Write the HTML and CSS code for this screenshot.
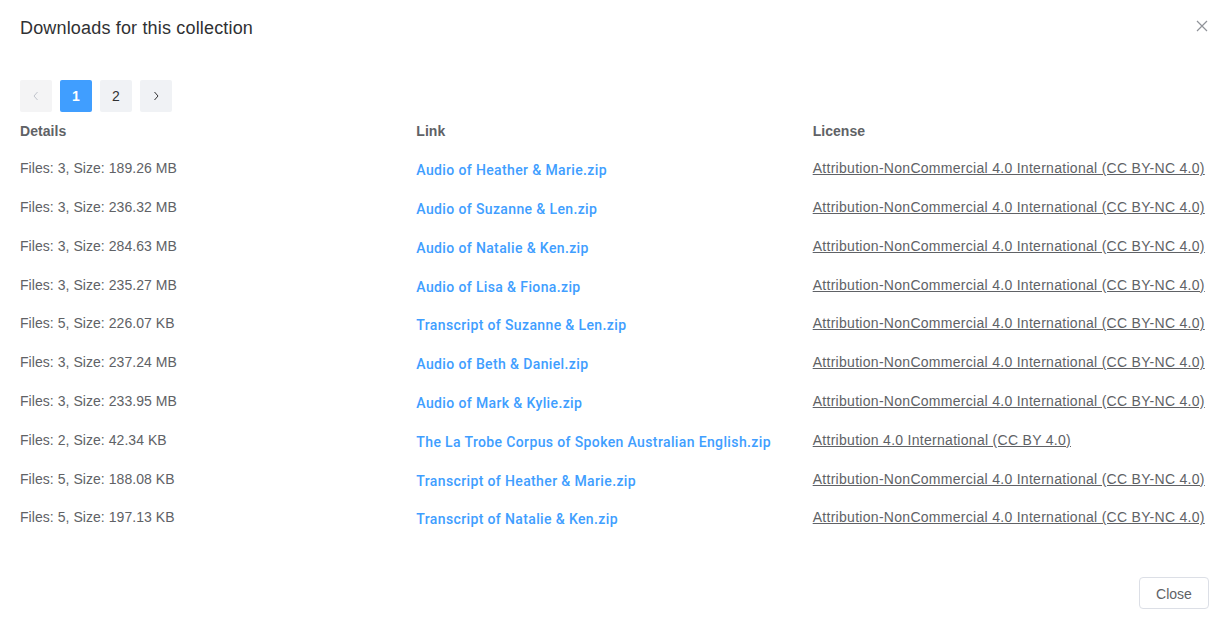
FILE: index.html
```html
<!DOCTYPE html>
<html>
<head>
<meta charset="utf-8">
<link rel="stylesheet" href="styles.css">
</head>
<body>
<div class="dialog">
  <div class="header">
    <span class="title">Downloads for this collection</span>
    <button class="x" aria-label="Close">
      <svg width="12" height="12" viewBox="0 0 12 12"><path d="M1 1L11 11M11 1L1 11" stroke="#909399" stroke-width="1.2" fill="none"/></svg>
    </button>
  </div>
  <div class="body">
    <div class="pager">
      <button class="pg disabled"><svg width="8" height="10" viewBox="0 0 8 10"><path d="M5.5 1L2 5l3.5 4" stroke="#c0c4cc" stroke-width="1" fill="none"/></svg></button>
      <button class="pg active">1</button>
      <button class="pg">2</button>
      <button class="pg"><svg width="8" height="10" viewBox="0 0 8 10"><path d="M2.5 1L6 5l-3.5 4" stroke="#303133" stroke-width="1" fill="none"/></svg></button>
    </div>
    <div class="table">
      <div class="row head"><div>Details</div><div>Link</div><div>License</div></div>
      <div class="row"><div>Files: 3, Size: 189.26 MB</div><div class="link"><a>Audio of Heather &amp; Marie.zip</a></div><div><a class="lic">Attribution-NonCommercial 4.0 International (CC BY-NC 4.0)</a></div></div>
      <div class="row"><div>Files: 3, Size: 236.32 MB</div><div class="link"><a>Audio of Suzanne &amp; Len.zip</a></div><div><a class="lic">Attribution-NonCommercial 4.0 International (CC BY-NC 4.0)</a></div></div>
      <div class="row"><div>Files: 3, Size: 284.63 MB</div><div class="link"><a>Audio of Natalie &amp; Ken.zip</a></div><div><a class="lic">Attribution-NonCommercial 4.0 International (CC BY-NC 4.0)</a></div></div>
      <div class="row"><div>Files: 3, Size: 235.27 MB</div><div class="link"><a>Audio of Lisa &amp; Fiona.zip</a></div><div><a class="lic">Attribution-NonCommercial 4.0 International (CC BY-NC 4.0)</a></div></div>
      <div class="row"><div>Files: 5, Size: 226.07 KB</div><div class="link"><a>Transcript of Suzanne &amp; Len.zip</a></div><div><a class="lic">Attribution-NonCommercial 4.0 International (CC BY-NC 4.0)</a></div></div>
      <div class="row"><div>Files: 3, Size: 237.24 MB</div><div class="link"><a>Audio of Beth &amp; Daniel.zip</a></div><div><a class="lic">Attribution-NonCommercial 4.0 International (CC BY-NC 4.0)</a></div></div>
      <div class="row"><div>Files: 3, Size: 233.95 MB</div><div class="link"><a>Audio of Mark &amp; Kylie.zip</a></div><div><a class="lic">Attribution-NonCommercial 4.0 International (CC BY-NC 4.0)</a></div></div>
      <div class="row"><div>Files: 2, Size: 42.34 KB</div><div class="link"><a>The La Trobe Corpus of Spoken Australian English.zip</a></div><div><a class="lic">Attribution 4.0 International (CC BY 4.0)</a></div></div>
      <div class="row"><div>Files: 5, Size: 188.08 KB</div><div class="link"><a>Transcript of Heather &amp; Marie.zip</a></div><div><a class="lic">Attribution-NonCommercial 4.0 International (CC BY-NC 4.0)</a></div></div>
      <div class="row"><div>Files: 5, Size: 197.13 KB</div><div class="link"><a>Transcript of Natalie &amp; Ken.zip</a></div><div><a class="lic">Attribution-NonCommercial 4.0 International (CC BY-NC 4.0)</a></div></div>
    </div>
  </div>
  <div class="footer">
    <button class="btn">Close</button>
  </div>
</div>
</body>
</html>
```
FILE: styles.css
```css
html, body {
  margin: 0;
  padding: 0;
  background: #fff;
}
body {
  font-family: "Liberation Sans", Arial, sans-serif;
  color: #606266;
  font-size: 14px;
  letter-spacing: 0.05px;
}
.dialog {
  width: 1229px;
  height: 622px;
  box-sizing: border-box;
  display: flex;
  flex-direction: column;
}
.header {
  position: relative;
  padding: 16px 20px 10px;
  line-height: 24px;
}
.title {
  font-size: 18px;
  color: #303133;
  letter-spacing: 0.17px;
}
.x {
  position: absolute;
  top: 20px;
  right: 21px;
  border: none;
  background: none;
  padding: 0;
  width: 12px;
  height: 12px;
  display: flex;
}
.body {
  padding: 29px 20px 0;
}
.pager {
  display: flex;
  gap: 8px;
}
.pg {
  width: 32px;
  height: 32px;
  border: none;
  border-radius: 2px;
  background: #f0f2f5;
  color: #303133;
  font-family: inherit;
  font-size: 14px;
  font-weight: 700;
  padding: 0;
  display: flex;
  align-items: center;
  justify-content: center;
}
.pg.disabled {
  background: #f4f4f5;
}
.pg.active {
  background: #409eff;
  color: #fff;
}
.pg:nth-child(3) { font-weight: 400; }
.table {
  margin-top: 8px;
}
.row {
  display: grid;
  grid-template-columns: 1fr 1fr 1fr;
  height: 38.78px;
  align-items: center;
}
.row.head {
  height: 22px;
  font-weight: 700;
  margin-bottom: 7px;
}
.link {
  padding-top: 4px;
}
.link a {
  font-family: Roboto, "Liberation Sans", sans-serif;
  color: #409eff;
  font-weight: 500;
  letter-spacing: 0.37px;
  text-decoration: none;
}
.lic {
  color: #606266;
  text-decoration: underline;
  letter-spacing: 0.29px;
}
.footer {
  margin-top: auto;
  padding: 0 20px 13px;
  display: flex;
  justify-content: flex-end;
}
.btn {
  width: 70px;
  height: 32px;
  border: 1px solid #dcdfe6;
  border-radius: 4px;
  background: #fff;
  color: #606266;
  font-family: inherit;
  font-size: 14px;
  font-weight: 400;
  padding: 0;
  padding-top: 1px;
}
```
